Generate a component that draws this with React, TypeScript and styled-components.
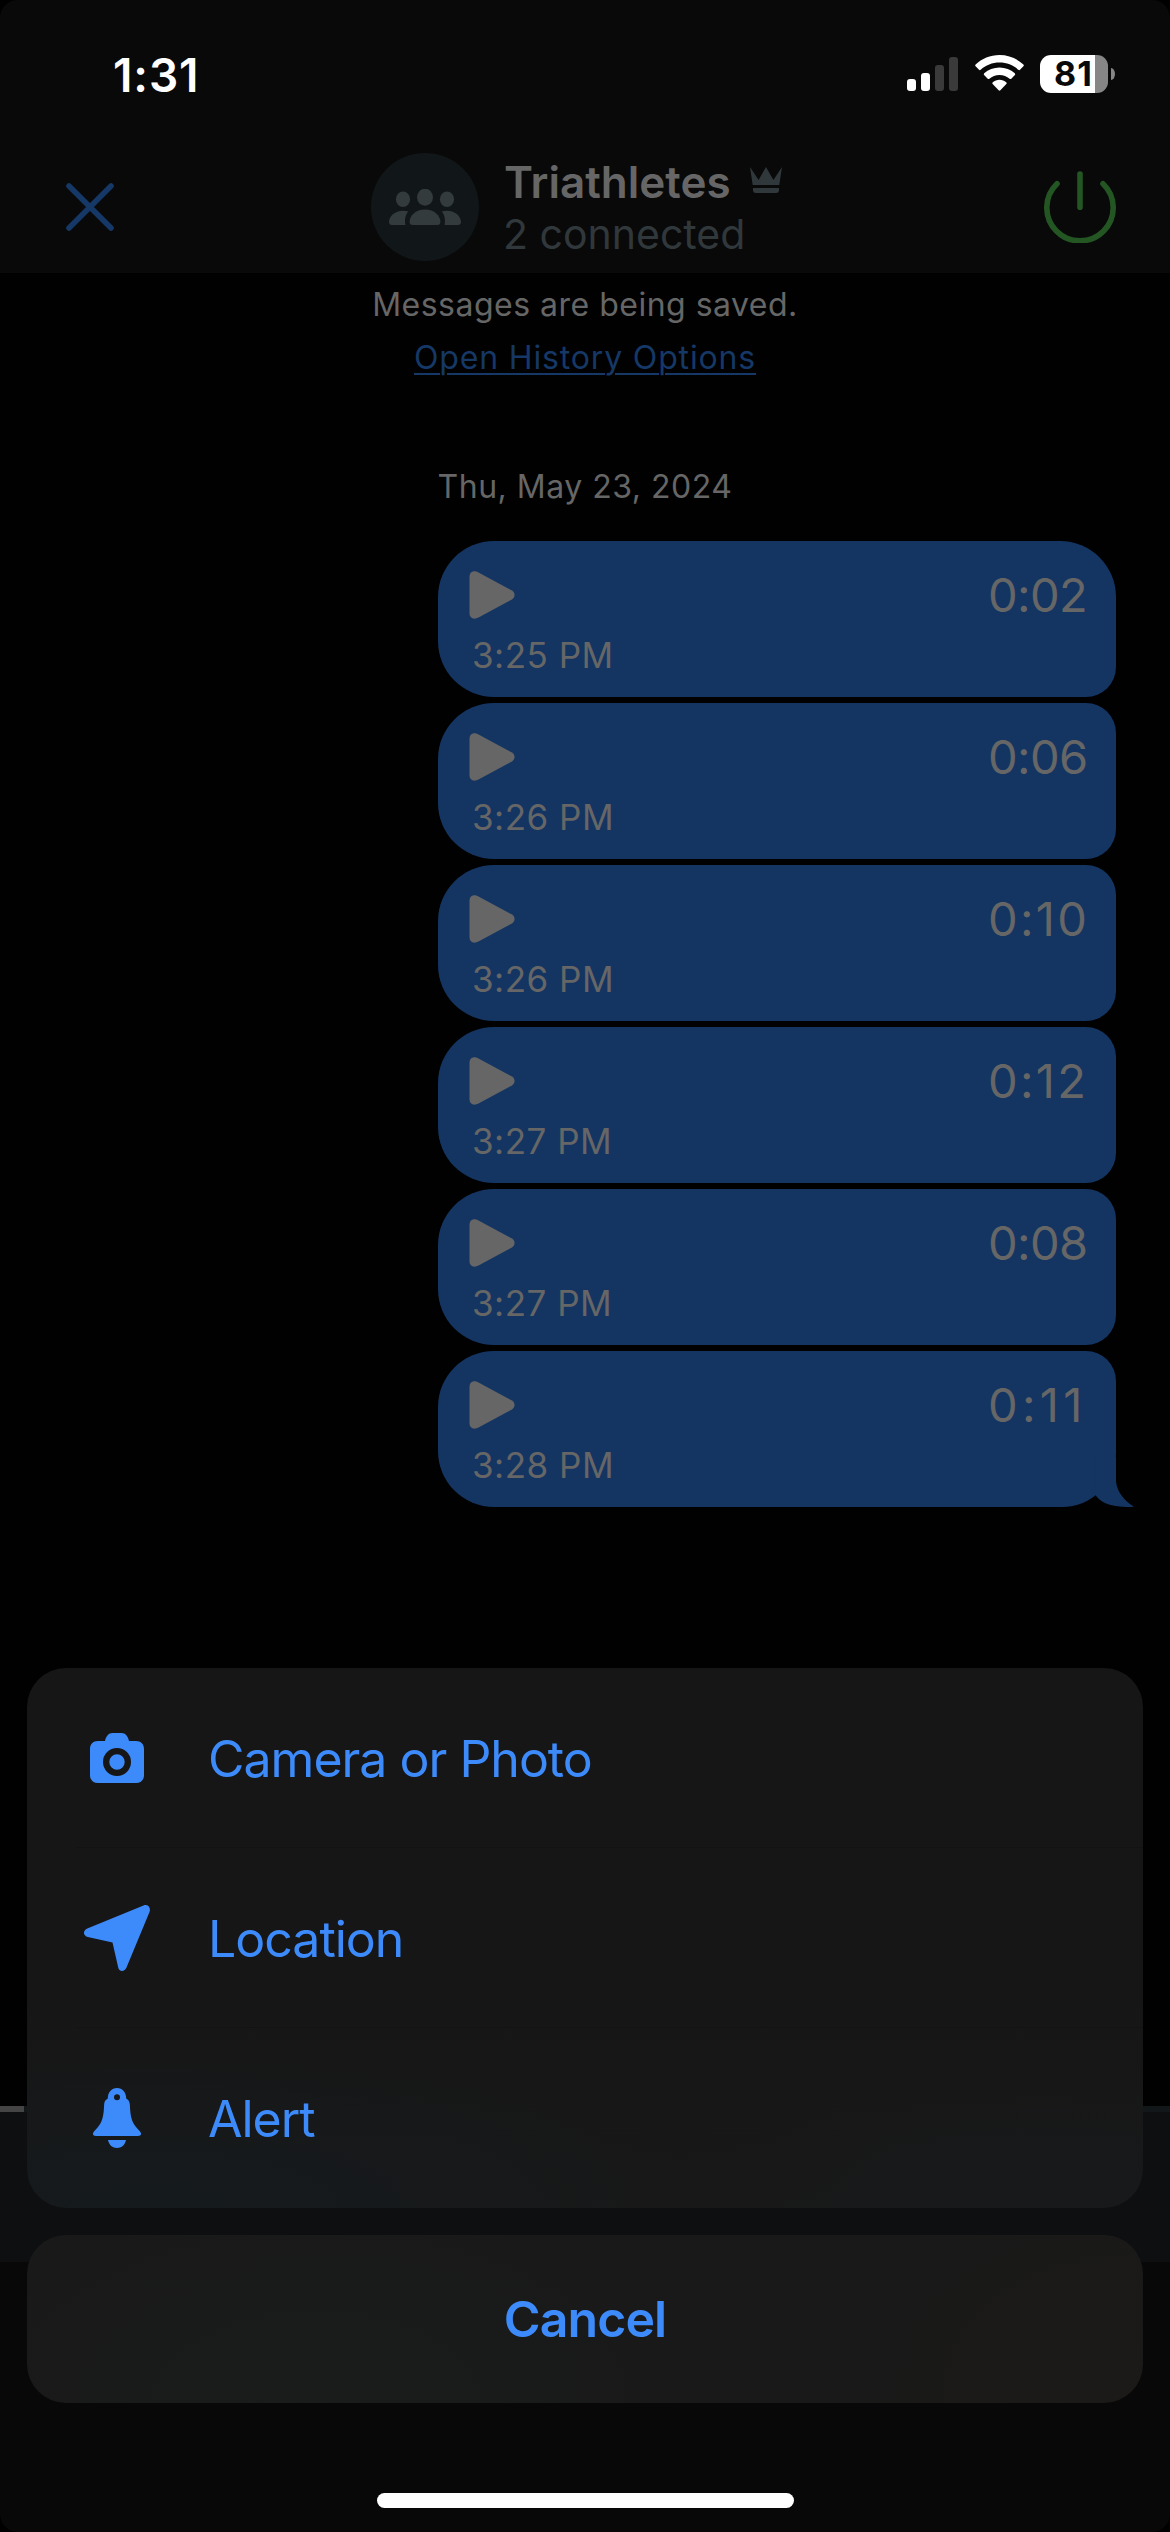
import React from "react";
import styled, { createGlobalStyle } from "styled-components";

const Global = createGlobalStyle`
  * { box-sizing: border-box; }
  html, body { margin: 0; padding: 0; background: #000; }
  body { font-family: Inter, "Liberation Sans", sans-serif; }
  button { font: inherit; border: 0; background: none; padding: 0; margin: 0; }
`;

const blue = "#3d8bfb";
const dimBlue = "#153866";
const dimText = "#666666";
const bubbleBlue = "#143562";

const Screen = styled.div`
  position: relative;
  width: 1170px;
  height: 2532px;
  overflow: hidden;
  border-radius: 18px;
  background: #010101;
  display: flex;
  flex-direction: column;
`;

const Top = styled.header`
  height: 273px;
  background: #090909;
  display: flex;
  flex-direction: column;
`;

const StatusBar = styled.div`
  height: 141px;
  padding: 55px 55px 0 113px;
  display: flex;
  justify-content: space-between;
  align-items: flex-start;
`;

const Clock = styled.div`
  color: #fff;
  font-size: 46px;
  font-weight: 600;
  line-height: 40px;
  letter-spacing: 0.9px;
`;

const StatusIcons = styled.div`
  display: flex;
  align-items: flex-start;
  gap: 17px;
`;

const Battery = styled.div`
  display: flex;
  align-items: center;
  gap: 3px;
  margin-left: -1px;
`;

const BatteryBody = styled.div<{ $level: number }>`
  width: 68px;
  height: 38px;
  border-radius: 11px;
  background: linear-gradient(90deg, #fff ${(p) => p.$level}%, #868686 ${(p) => p.$level}%);
  color: #090909;
  font-size: 34px;
  font-weight: 700;
  line-height: 38px;
  letter-spacing: 1px;
  padding-left: 14px;
`;

const BatteryCap = styled.div`
  width: 4px;
  height: 12px;
  border-radius: 0 4px 4px 0 / 0 6px 6px 0;
  background: #868686;
`;

const NavBar = styled.div`
  height: 132px;
  padding: 0 54px 0 66px;
  display: grid;
  grid-template-columns: 305px 1fr 72px;
  align-items: center;
`;

const Channel = styled.div`
  display: flex;
  align-items: center;
  gap: 25px;
`;

const Avatar = styled.div`
  width: 108px;
  height: 108px;
  border-radius: 50%;
  background: #111618;
  display: grid;
  place-items: center;
`;

const ChannelText = styled.div`
  display: flex;
  flex-direction: column;
  padding-top: 2px;
`;

const ChannelName = styled.div`
  display: flex;
  align-items: center;
  gap: 19px;
  height: 52px;
  color: ${dimText};
  font-size: 44px;
  font-weight: 600;
  line-height: 52px;

  svg {
    margin-bottom: 4px;
  }
`;

const ChannelStatus = styled.div`
  height: 52px;
  margin-left: -1px;
  color: #30383b;
  font-size: 41px;
  line-height: 52px;
`;

const Chat = styled.main`
  height: 1833px;
  display: flex;
  flex-direction: column;
`;

const Notice = styled.div`
  display: flex;
  flex-direction: column;
  align-items: center;
  padding-top: 5px;
  font-size: 32px;
  line-height: 53px;
  letter-spacing: 0.49px;
  color: ${dimText};
`;

const NoticeLink = styled.a`
  color: ${dimBlue};
  letter-spacing: 0.84px;
  text-decoration: underline;
  text-decoration-thickness: 2px;
  text-underline-offset: 4px;
`;

const DateLabel = styled.div`
  margin-top: 76px;
  text-align: center;
  font-size: 32px;
  line-height: 53px;
  letter-spacing: 0.5px;
  color: ${dimText};
`;

const Messages = styled.div`
  margin: 28px 54px 0 438px;
  display: flex;
  flex-direction: column;
  gap: 6px;
`;

const Bubble = styled.div<{ $first: boolean; $last: boolean }>`
  position: relative;
  height: 156px;
  padding: 24px 28px 0 31px;
  background: ${bubbleBlue};
  border-radius: 56px ${(p) => (p.$first ? 56 : 30)}px ${(p) => (p.$last ? 54 : 30)}px 56px;
  color: ${dimText};
`;

const BubbleRow = styled.div`
  height: 60px;
  display: flex;
  justify-content: space-between;
  align-items: center;
`;

/* Narrow "1" glyphs get extra tracking so every duration fills the same column. */
const Duration = styled.span<{ $ones: number }>`
  width: 100px;
  white-space: nowrap;
  font-size: 47px;
  line-height: 60px;
  letter-spacing: ${(p) => [-0.6, 2.3, 4.3][p.$ones]}px;
`;

const SentAt = styled.div`
  padding: 7px 0 0 3px;
  font-size: 35px;
  line-height: 46px;
  letter-spacing: 0.5px;
`;

const Tail = styled.svg`
  position: absolute;
  right: -18px;
  bottom: 0;
`;

const Talk = styled.footer`
  flex: 1;
  display: flex;
  flex-direction: column;
  background: #080808;
`;

const Progress = styled.div`
  height: 6px;
  background: linear-gradient(90deg, #444 24px, #121819 24px);
`;

const Tools = styled.div`
  height: 150px;
  background: #0d0f10;
`;

const Sheet = styled.div`
  position: absolute;
  left: 27px;
  right: 27px;
  top: 1668px;
  display: flex;
  flex-direction: column;
  gap: 27px;
`;

const Actions = styled.div`
  height: 540px;
  border-radius: 39px;
  background:
    radial-gradient(ellipse 560px 170px at 120px 540px, #151a1d, rgba(21, 26, 29, 0)),
    radial-gradient(ellipse 400px 150px at 1020px 540px, #17191b, rgba(23, 25, 27, 0)),
    linear-gradient(#161616 60%, #181818);
  display: flex;
  flex-direction: column;
`;

const Action = styled.button`
  position: relative;
  height: 180px;
  padding-left: 54px;
  display: grid;
  grid-template-columns: 72px 1fr;
  column-gap: 55px;
  align-items: center;
  justify-items: center;
  color: ${blue};
  font-size: 50px;
  line-height: 60px;
  letter-spacing: -1px;

  & + &::before {
    content: "";
    position: absolute;
    left: 48px;
    right: 0;
    top: -1px;
    height: 1px;
    background: #131313;
  }
`;

const ActionLabel = styled.span`
  justify-self: start;
  padding-top: 2px;
`;

const Cancel = styled.button`
  height: 168px;
  border-radius: 39px;
  background:
    radial-gradient(ellipse 300px 220px at 1090px 150px, #1c1a18, rgba(28, 26, 24, 0)),
    radial-gradient(ellipse 360px 200px at 290px 168px, #1a1c1c, rgba(26, 28, 28, 0)),
    #191919;
  color: ${blue};
  font-size: 50px;
  font-weight: 600;
  line-height: 168px;
  letter-spacing: -0.9px;
`;

const HomeIndicator = styled.div`
  position: absolute;
  left: 377px;
  bottom: 24px;
  width: 417px;
  height: 15px;
  border-radius: 8px;
  background: #fff;
`;

const SignalIcon = () => (
  <svg width="51" height="36" viewBox="0 0 51 36">
    <rect x="0" y="24" width="9" height="12" rx="3" fill="#fff" />
    <rect x="14" y="18" width="9" height="18" rx="3" fill="#fff" />
    <rect x="28" y="10" width="9" height="26" rx="3" fill="#3a3a3a" />
    <rect x="42" y="2" width="9" height="34" rx="3" fill="#3a3a3a" />
  </svg>
);

const WifiIcon = () => (
  <svg width="49" height="36" viewBox="0 0 49 36" fill="#fff">
    <path d="M24.500 0C33.800 0 42.200 3.600 48.400 9.600Q49.200 10.400 48.400 11.300L45 14.800Q44.200 15.600 43.300 14.800C38.300 10.200 31.800 7.600 24.500 7.600S10.700 10.200 5.700 14.800Q4.800 15.600 4 14.800L.6 11.300Q-.2 10.400.6 9.600C6.800 3.600 15.200 0 24.500 0Z" />
    <path d="M24.500 12.500C30.300 12.500 35.700 14.700 39.800 18.300Q40.700 19.200 39.900 20.100L36.300 23.700Q35.500 24.500 34.600 23.700C31.900 21.400 28.400 20 24.500 20S17.100 21.400 14.400 23.700Q13.500 24.500 12.700 23.700L9.100 20.100Q8.300 19.200 9.200 18.300C13.300 14.700 18.700 12.500 24.500 12.500Z" />
    <path d="M24.500 24.800C27.100 24.800 29.400 25.700 31.200 27.200Q32.100 28.100 31.300 29L25.400 35.200Q24.500 36.100 23.600 35.200L17.700 29Q16.900 28.100 17.800 27.200C19.600 25.700 21.900 24.800 24.500 24.800Z" />
  </svg>
);

const CloseIcon = () => (
  <svg width="48" height="48" viewBox="0 0 48 48" fill="none" stroke={dimBlue} strokeWidth="5.600" strokeLinecap="round">
    <path d="M3 3L45 45M45 3L3 45" />
  </svg>
);

const GroupIcon = () => (
  <svg width="72" height="36" viewBox="0 0 72 36" fill="#333b3d">
    <ellipse cx="14" cy="10.300" rx="7.100" ry="7.800" />
    <ellipse cx="58" cy="10.300" rx="7.100" ry="7.800" />
    <ellipse cx="36" cy="8.200" rx="8" ry="8.500" />
    <path d="M36 20.500C45.500 20.500 51.400 27 51.400 32.800Q51.400 36 48.400 36H23.600Q20.600 36 20.600 32.800C20.600 27 26.500 20.500 36 20.500Z" />
    <path d="M14 21.700Q17 21.700 19.200 22.500C16.200 26 15.400 31 16.400 36H3Q0 36 0 32.800C0 27.600 5.500 21.700 14 21.700Z" />
    <path d="M58 21.700Q55 21.700 52.800 22.500C55.800 26 56.600 31 55.600 36H69Q72 36 72 32.800C72 27.600 66.500 21.700 58 21.700Z" />
  </svg>
);

const CrownIcon = () => (
  <svg width="32" height="26" viewBox="0 0 32 26" fill="#30383b">
    <path d="M0 0L8.600 13L16 0L23.400 13L32 0L29.300 18H2.700Z" />
    <path d="M3 21H29V23.600Q29 26 26.500 26H5.500Q3 26 3 23.600Z" />
  </svg>
);

const PowerIcon = () => (
  <svg width="72" height="72" viewBox="0 0 72 72" fill="none" stroke="#235623" strokeWidth="5.600" strokeLinecap="round">
    <path d="M36 3V36.200" />
    <path d="M13 12.700A33.200 33.200 0 1 0 59 12.700" />
  </svg>
);

const PlayIcon = () => (
  <svg width="47" height="48" viewBox="0 0 47 48" fill={dimText}>
    <path d="M.5 6C.5 1 4.500-1.200 9.500 1.400L42.500 19.300C46.600 21.600 46.600 26.400 42.500 28.700L9.500 46.600C4.500 49.200.5 47 .5 42Z" />
  </svg>
);

const CameraIcon = () => (
  <svg width="54" height="50" viewBox="0 0 54 50" fill={blue} fillRule="evenodd">
    <path d="M8 8H15C16 3.500 18.500 0 22.500 0H31.500C35.500 0 38 3.500 39 8H46C51 8 54 11 54 16V42C54 47 51 50 46 50H8C3 50 0 47 0 42V16C0 11 3 8 8 8ZM27 15A14 14 0 1 0 27 43A14 14 0 1 0 27 15ZM27 21.300A7.700 7.700 0 1 1 27 36.700A7.700 7.700 0 1 1 27 21.300Z" />
  </svg>
);

const LocationIcon = () => (
  <svg width="66" height="66" viewBox="0 0 66 66" fill={blue}>
    <path d="M59.500.4C63.500-1 67 2 65.600 6.800L42.500 62.500C40.500 67.300 34.800 67 34.100 62L28.500 37.500L3.800 31.900C-1.200 30.800-1.300 25.400 3.300 23.400Z" />
  </svg>
);

const BellIcon = () => (
  <svg width="48" height="60" viewBox="0 0 48 60" fill={blue} fillRule="evenodd">
    <path d="M24 0C29.500 0 33.200 4.200 33.200 10.500C35.800 11.800 36.700 14 36.900 17C37.300 28 38.700 34 43 39L47 43.500C49 46 48 48 45 48H3C0 48-1 46 1 43.500L5 39C9.300 34 10.700 28 11.100 17C11.200 14 12.200 11.800 14.800 10.500C14.800 4.200 18.500 0 24 0ZM24 6.200A3 3 0 1 0 24 12.200A3 3 0 1 0 24 6.200Z" />
    <path d="M15 52H33C32 57 28.500 60 24 60S16 57 15 52Z" />
  </svg>
);

const voiceMessages = [
  { sentAt: "3:25 PM", duration: "0:02" },
  { sentAt: "3:26 PM", duration: "0:06" },
  { sentAt: "3:26 PM", duration: "0:10" },
  { sentAt: "3:27 PM", duration: "0:12" },
  { sentAt: "3:27 PM", duration: "0:08" },
  { sentAt: "3:28 PM", duration: "0:11" },
];

const actions = [
  { label: "Camera or Photo", Icon: CameraIcon },
  { label: "Location", Icon: LocationIcon },
  { label: "Alert", Icon: BellIcon },
];

export default function App() {
  return (
    <>
      <Global />
      <Screen>
        <Top>
          <StatusBar>
            <Clock>1:31</Clock>
            <StatusIcons>
              <SignalIcon />
              <WifiIcon />
              <Battery>
                <BatteryBody $level={81}>81</BatteryBody>
                <BatteryCap />
              </Battery>
            </StatusIcons>
          </StatusBar>
          <NavBar>
            <CloseIcon />
            <Channel>
              <Avatar>
                <GroupIcon />
              </Avatar>
              <ChannelText>
                <ChannelName>
                  Triathletes
                  <CrownIcon />
                </ChannelName>
                <ChannelStatus>2 connected</ChannelStatus>
              </ChannelText>
            </Channel>
            <PowerIcon />
          </NavBar>
        </Top>
        <Chat>
          <Notice>
            <span>Messages are being saved.</span>
            <NoticeLink>Open History Options</NoticeLink>
          </Notice>
          <DateLabel>Thu, May 23, 2024</DateLabel>
          <Messages>
            {voiceMessages.map((m, i) => {
              const last = i === voiceMessages.length - 1;
              return (
                <Bubble key={i} $first={i === 0} $last={last}>
                  <BubbleRow>
                    <PlayIcon />
                    <Duration $ones={m.duration.split("1").length - 1}>{m.duration}</Duration>
                  </BubbleRow>
                  <SentAt>{m.sentAt}</SentAt>
                  {last && (
                    <Tail width="44" height="50" viewBox="0 0 44 50" fill={bubbleBlue}>
                      <path d="M6 0H26V24.500C27 35 35 44.500 44 49.700C28 50.700 13 48.500 5.700 38.500Z" />
                    </Tail>
                  )}
                </Bubble>
              );
            })}
          </Messages>
        </Chat>
        <Talk>
          <Progress />
          <Tools />
        </Talk>
        <Sheet>
          <Actions>
            {actions.map(({ label, Icon }) => (
              <Action key={label}>
                <Icon />
                <ActionLabel>{label}</ActionLabel>
              </Action>
            ))}
          </Actions>
          <Cancel>Cancel</Cancel>
        </Sheet>
        <HomeIndicator />
      </Screen>
    </>
  );
}
